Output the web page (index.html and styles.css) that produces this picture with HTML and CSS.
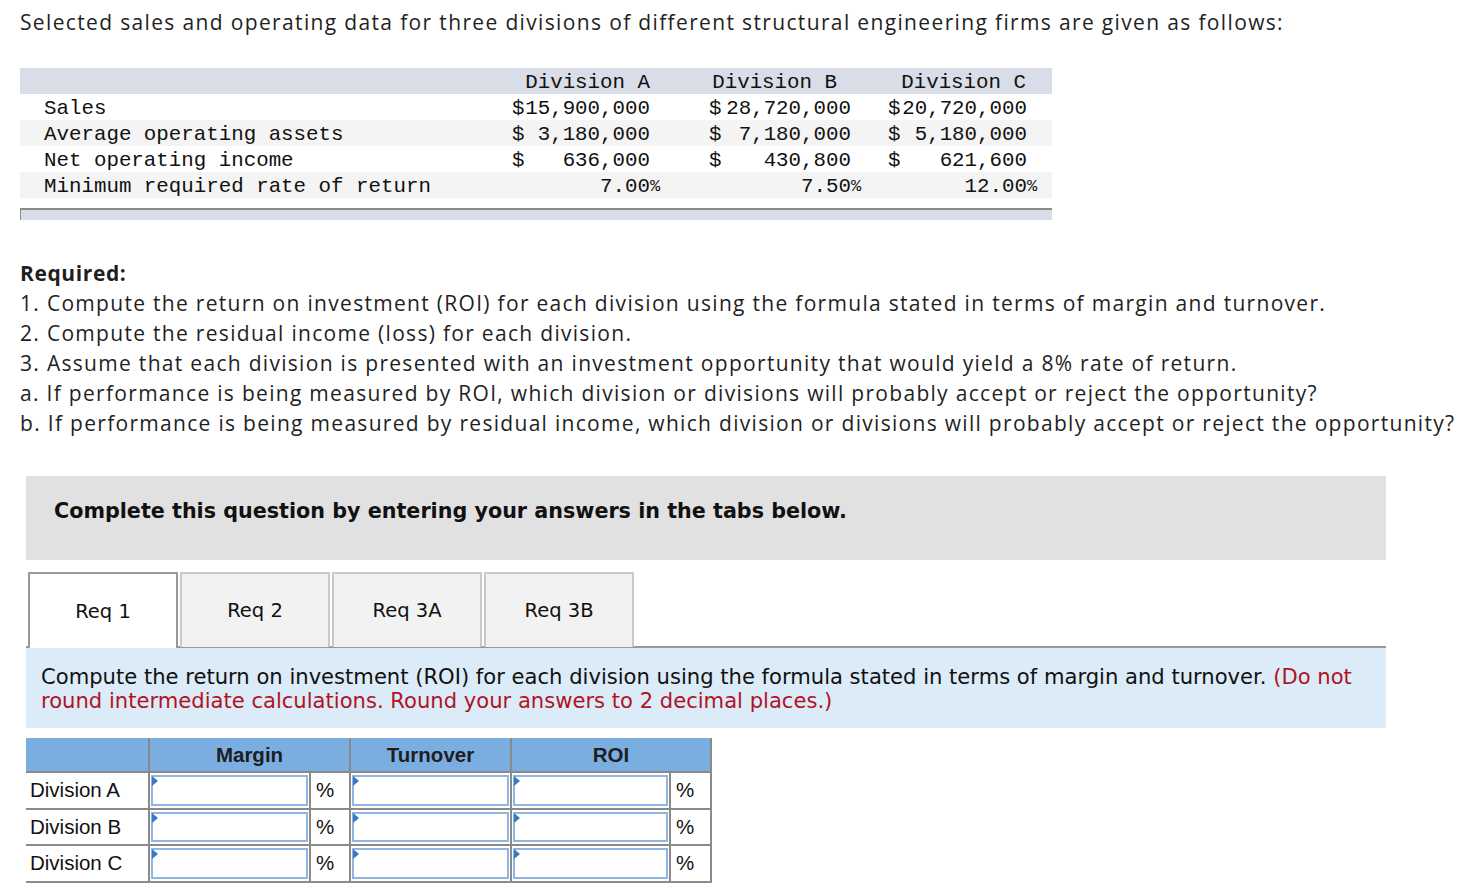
FILE: index.html
```html
<!DOCTYPE html>
<html>
<head>
<meta charset="utf-8">
<title>ROI</title>
<link rel="stylesheet" href="styles.css">
</head>
<body>
<p class="intro">Selected sales and operating data for three divisions of different structural engineering firms are given as follows:</p>

<div class="data">
  <div class="drow dhead">
    <span class="lbl"></span>
    <span class="hA">Division A</span>
    <span class="hB">Division B</span>
    <span class="hC">Division C</span>
  </div>
  <div class="drow">
    <span class="lbl">Sales</span>
    <span>$</span><span class="num">15,900,000</span><span></span>
    <span>$</span><span class="num">28,720,000</span><span></span>
    <span>$</span><span class="num">20,720,000</span><span></span>
  </div>
  <div class="drow alt">
    <span class="lbl">Average operating assets</span>
    <span>$</span><span class="num">3,180,000</span><span></span>
    <span>$</span><span class="num">7,180,000</span><span></span>
    <span>$</span><span class="num">5,180,000</span><span></span>
  </div>
  <div class="drow">
    <span class="lbl">Net operating income</span>
    <span>$</span><span class="num">636,000</span><span></span>
    <span>$</span><span class="num">430,800</span><span></span>
    <span>$</span><span class="num">621,600</span><span></span>
  </div>
  <div class="drow alt">
    <span class="lbl">Minimum required rate of return</span>
    <span></span><span class="num">7.00</span><span class="pct">%</span>
    <span></span><span class="num">7.50</span><span class="pct">%</span>
    <span></span><span class="num">12.00</span><span class="pct">%</span>
  </div>
  <div class="dfoot"></div>
</div>

<div class="required">
  <p class="req-title">Required:</p>
  <p>1. Compute the return on investment (ROI) for each division using the formula stated in terms of margin and turnover.</p>
  <p>2. Compute the residual income (loss) for each division.</p>
  <p>3. Assume that each division is presented with an investment opportunity that would yield a 8% rate of return.</p>
  <p>a. If performance is being measured by ROI, which division or divisions will probably accept or reject the opportunity?</p>
  <p>b. If performance is being measured by residual income, which division or divisions will probably accept or reject the opportunity?</p>
</div>

<div class="notice">Complete this question by entering your answers in the tabs below.</div>

<div class="tabs">
  <div class="tab active">Req 1</div>
  <div class="tab">Req 2</div>
  <div class="tab">Req 3A</div>
  <div class="tab">Req 3B</div>
</div>

<div class="instr">Compute the return on investment (ROI) for each division using the formula stated in terms of margin and turnover. <span class="red">(Do not round intermediate calculations. Round your answers to 2 decimal places.)</span></div>

<table class="ans">
  <colgroup>
    <col class="c-lbl"><col class="c-in"><col class="c-pct"><col class="c-in"><col class="c-in2"><col class="c-pct2">
  </colgroup>
  <thead>
    <tr>
      <th class="blank"></th>
      <th colspan="2">Margin</th>
      <th>Turnover</th>
      <th colspan="2">ROI</th>
    </tr>
  </thead>
  <tbody>
    <tr>
      <td class="rl">Division A</td>
      <td class="ic"><div class="inp"></div></td>
      <td class="pc">%</td>
      <td class="ic"><div class="inp"></div></td>
      <td class="ic"><div class="inp"></div></td>
      <td class="pc">%</td>
    </tr>
    <tr>
      <td class="rl">Division B</td>
      <td class="ic"><div class="inp"></div></td>
      <td class="pc">%</td>
      <td class="ic"><div class="inp"></div></td>
      <td class="ic"><div class="inp"></div></td>
      <td class="pc">%</td>
    </tr>
    <tr>
      <td class="rl">Division C</td>
      <td class="ic"><div class="inp"></div></td>
      <td class="pc">%</td>
      <td class="ic"><div class="inp"></div></td>
      <td class="ic"><div class="inp"></div></td>
      <td class="pc">%</td>
    </tr>
  </tbody>
</table>
</body>
</html>
```

FILE: styles.css
```css
html, body {
  margin: 0;
  padding: 0;
  background: #fff;
}
body {
  font-family: "Open Sans", "Liberation Sans", sans-serif;
  color: #1f1f1f;
  width: 1472px;
}
p { margin: 0; }

.intro {
  font-size: 21px;
  letter-spacing: 1.35px;
  line-height: 30px;
  padding: 7px 0 0 20px;
  white-space: nowrap;
}

.data {
  margin: 31px 0 0 20px;
  width: 1032px;
  font-family: "Liberation Mono", "Courier New", monospace;
  font-size: 20.8px;
  color: #111;
}
.drow {
  display: grid;
  grid-template-columns: 492px 13px 125px 59px 13px 129px 37px 13px 126px 25px;
  height: 24px;
  padding-top: 2px;
  line-height: 26px;
  white-space: pre;
}
.drow .lbl { padding-left: 24px; }
.drow .num { text-align: right; }
.drow .pct { font-size: 17px; }
.dhead { background: #d9dde7; }
.dhead .hA { grid-column: 2 / 4; text-align: right; }
.dhead .hB { grid-column: 5 / 7; text-align: right; padding-right: 14px; }
.dhead .hC { grid-column: 8 / 10; text-align: right; padding-right: 1px; }
.alt { background: #f4f4f4; }
.dfoot {
  margin-top: 10px;
  height: 10px;
  background: #d9dde7;
  border-top: 2px solid #8a8a8a;
  border-left: 1px solid #8a8a8a;
}

.required {
  margin: 38px 0 0 20px;
  font-size: 21px;
  letter-spacing: 1.3px;
  line-height: 30px;
  white-space: nowrap;
}
.req-title { font-weight: 700; letter-spacing: 0.6px; }

.notice {
  margin: 38px 0 0 26px;
  width: 1332px;
  height: 62px;
  padding: 22px 0 0 28px;
  background: #e1e1e1;
  font-family: "DejaVu Sans", sans-serif;
  font-weight: 700;
  font-size: 20.7px;
  line-height: 26px;
  color: #111;
}

.tabs {
  margin: 12px 0 0 26px;
  width: 1358px;
  padding-left: 2px;
  display: flex;
  gap: 2px;
  border-bottom: 2px solid #999;
  height: 74px;
}
.tab {
  width: 146px;
  height: 73px;
  background: #f2f2f2;
  border: 2px solid #c9c9c9;
  border-bottom: none;
  display: flex;
  align-items: center;
  justify-content: center;
  font-family: "DejaVu Sans", sans-serif;
  font-size: 19.5px;
  color: #111;
}
.tab.active {
  background: #fff;
  border-color: #999;
  height: 74px;
  margin-bottom: -2px;
  position: relative;
  z-index: 1;
}

.instr {
  margin: 0 0 0 26px;
  width: 1345px;
  height: 63px;
  padding: 17px 0 0 15px;
  background: #dcebf8;
  font-family: "DejaVu Sans", sans-serif;
  font-size: 21.1px;
  line-height: 24px;
  color: #111;
}
.red { color: #b01424; }

.ans {
  margin: 10px 0 0 26px;
  border-collapse: collapse;
  table-layout: fixed;
  width: 685px;
  font-family: "Liberation Sans", Arial, sans-serif;
  font-size: 20.5px;
  color: #111;
}
.c-lbl { width: 123px; }
.c-in { width: 161px; }
.c-pct { width: 40px; }
.c-in2 { width: 159px; }
.c-pct2 { width: 41px; }

.ans th {
  background: #7aaee1;
  height: 33px;
  padding: 0;
  font-weight: 700;
  color: #1e1e1e;
  border-left: 2px solid #8a8a8a;
  border-right: 2px solid #8a8a8a;
  border-bottom: 2px solid #8a8a8a;
}
.ans th.blank { border-left: none; }
.ans td {
  height: 32.5px;
  padding: 0;
  border: 2px solid #8a8a8a;
  vertical-align: middle;
}
.ans td.rl {
  border-left: none;
  padding-left: 4px;
  white-space: nowrap;
}
.ans td.pc { padding-left: 5px; }
.ans td.ic { padding: 1px; }
.inp {
  position: relative;
  height: 26.5px;
  border: 2px solid #8fb5e2;
  background: #fff;
}
.inp::before {
  content: "";
  position: absolute;
  left: -1px;
  top: -1px;
  border-left: 6px solid #3a78c2;
  border-top: 5px solid transparent;
  border-bottom: 5px solid transparent;
}
```
